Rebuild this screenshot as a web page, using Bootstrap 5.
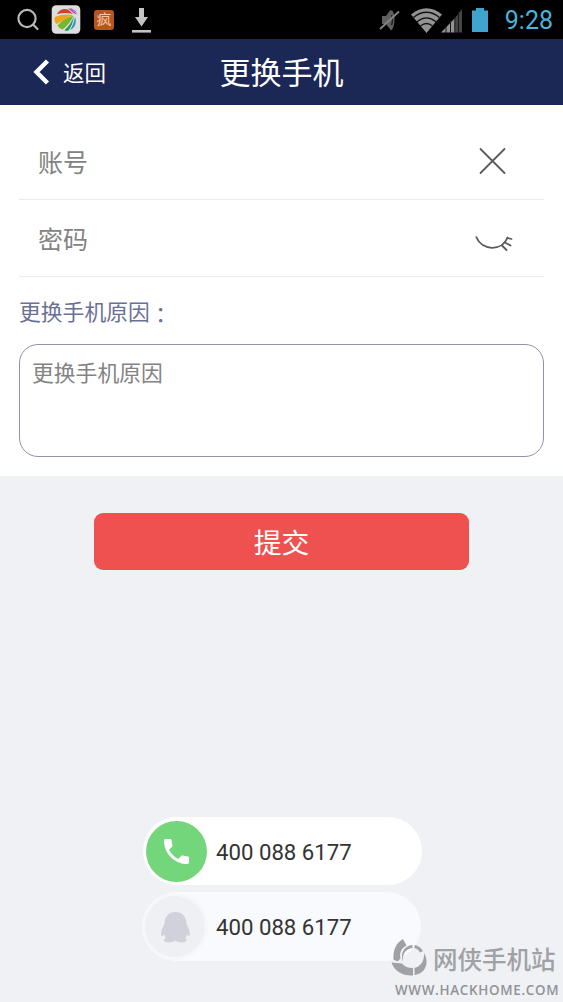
<!DOCTYPE html>
<html lang="zh-CN">
<head>
    <meta charset="UTF-8">
    <meta name="viewport" content="width=device-width, initial-scale=1.0">
    <title>更换手机</title>
    <link href="https://cdn.jsdelivr.net/npm/bootstrap@5.3.0/dist/css/bootstrap.min.css" rel="stylesheet">
    <style>
        body {
            background-color: #eff1f5;
            font-family: Roboto, "Noto Sans CJK SC", sans-serif;
            min-height: 1002px;
            overflow: hidden;
        }
        svg {
            display: block;
            flex-shrink: 0;
        }
        .status-bar {
            height: 39px;
            background: #000;
            padding: 0 10px 0 16px;
        }
        .app-glyph {
            width: 20px;
            height: 20px;
            border-radius: 3px;
            background: #b9531f;
            color: #f3c9a8;
            font-size: 15px;
            line-height: 20px;
            margin: 0 17px 0 9px;
        }
        .clock {
            color: #48b4dc;
            font-size: 25px;
            line-height: 37px;
            padding-top: 2px;
            margin-left: 16px;
        }
        .title-bar {
            height: 66px;
            background: #1b2755;
            color: #fff;
        }
        .title-bar .side {
            width: 188px;
            padding-left: 32px;
            font-size: 21.5px;
        }
        .title-bar .side span {
            margin-left: 13px;
            padding-top: 4px;
        }
        .title-bar h1 {
            font-size: 31px;
            line-height: 66px;
            font-weight: 400;
            padding-top: 4px;
        }
        .form-panel {
            height: 371px;
            padding: 18px 19px 0;
        }
        .field-row {
            height: 77px;
            border-bottom: 1px solid #ebebed;
            padding-left: 19px;
            color: #838383;
            font-size: 25px;
        }
        .field-row span {
            padding-top: 5px;
        }
        .reason-label {
            color: #6a7096;
            font-size: 21.8px;
            line-height: 32px;
            height: 32px;
            margin: 20px 0 15px;
        }
        .reason-label span {
            display: inline-block;
            font-family: "Noto Sans CJK TC", sans-serif;
            vertical-align: top;
            padding-top: 1px;
        }
        .reason-box {
            height: 113px;
            border: 1px solid #9092ac;
            border-radius: 19px;
            padding: 13px 12px;
            color: #838383;
            font-size: 21.8px;
            line-height: 32px;
        }
        .submit-btn {
            width: 375px;
            height: 57px;
            margin-top: 37px;
            border-radius: 9px;
            background: #ee5150;
            color: #fff;
            font-size: 27.8px;
            line-height: 60px;
        }
        .contact-list {
            margin-top: 247px;
            padding-left: 142px;
            gap: 7px;
        }
        .contact-pill {
            width: 279px;
            height: 68px;
            background: #fff;
            color: #333;
            font-size: 22.2px;
        }
        .contact-pill.phone {
            margin-left: 1px;
            padding: 0 0 0 3px;
        }
        .contact-pill.qq {
            height: 69px;
            background: #f8fafd;
            padding-left: 3px;
        }
        .contact-icon {
            width: 61px;
            height: 61px;
            background: #74d67a;
        }
        .qq .contact-icon {
            width: 60px;
            background: #eff0f4;
            box-shadow: 0 0 0 3px #f7f7f9;
        }
        .phone .number { margin-left: 9px; padding-top: 4px; }
        .qq .number { margin-left: 11px; padding-top: 3px; }
        .site-mark {
            right: 4px;
            bottom: 2px;
            width: 170px;
            color: #a0a1a4;
        }
        .site-name {
            font-size: 24.5px;
            line-height: 38px;
            font-weight: 500;
            margin-left: 4px;
            padding-top: 4px;
        }
        .site-url {
            font-family: "Open Sans", sans-serif;
            font-size: 13.4px;
            line-height: 20px;
            letter-spacing: .7px;
            font-weight: 600;
            color: #929397;
            padding-left: 6px;
        }
    </style>
</head>
<body>
    <!-- System status bar -->
    <div class="status-bar d-flex align-items-center justify-content-between">
        <div class="d-flex align-items-center">
            <svg width="24" height="24" viewBox="0 0 24 24" fill="none" stroke="#b9b9b9" stroke-width="2.2" stroke-linecap="round">
                <circle cx="11" cy="10.500" r="8.6"/>
                <path d="M17.3 16.800 L21.500 21"/>
            </svg>
            <svg class="ms-2" width="37" height="39" viewBox="0 0 37 39">
                <rect x="3.7" y="5.2" width="28.6" height="28.6" rx="4.500" fill="#dedede"/>
                <path d="M8.800 14.300 C11 9.500 16 8 20 9.500 L25 14 Q17 12 8.800 14.300Z" fill="#d5412b"/>
                <path d="M6.800 17 Q15 13.500 25 15 L8.500 24 Q5.500 21 6.800 17Z" fill="#eda51c"/>
                <path d="M25.500 15.500 Q15 19 9.500 25.500 Q11 28.500 14.500 29.500 Q22 24 25.500 15.500Z" fill="#78b62b"/>
                <path d="M26 16 Q23 24.500 16.500 30.300 Q18.500 31.500 20.500 30.500 Q25 24 26 16Z" fill="#279a52"/>
                <path d="M27 16.500 Q26 24 22 30 Q26 28.500 27.500 24 Q28.500 20 27 16.500Z" fill="#3192cb"/>
                <path d="M20 8.500 L24 8.500 L29 14.500 L26 13.500Z M25 8.800 Q28 10 29.500 14 L27.500 12Z" fill="#a95abb"/>
            </svg>
            <div class="app-glyph text-center">疯</div>
            <svg width="21" height="28" viewBox="0 0 21 28" fill="#c4c4c4">
                <path d="M8 2 H13 V11 H17 L10.5 20.5 L4 11 H8Z"/>
                <rect x="1" y="24" width="19" height="2.6"/>
            </svg>
        </div>
        <div class="d-flex align-items-center">
            <svg width="22" height="26" viewBox="0 0 22 26">
                <path d="M3 9 H7 L11 3.500 Q15 2 15.500 12 Q15.500 21 12 23.500 L7 17 H3Z" fill="#606060"/>
                <path d="M12.500 8 Q14.500 13 12.500 18" fill="none" stroke="#222" stroke-width="1.5"/>
                <path d="M1 22 L20 4.500" stroke="#858585" stroke-width="1.8"/>
            </svg>
            <svg class="ms-2" width="54" height="28" viewBox="0 0 54 28">
                <path d="M2 8.500 Q17.500 -4 33 8.500 L17.500 27Z" fill="#939393"/>
                <g fill="none" stroke="#111" stroke-width="1.3">
                    <path d="M4.500 11.500 Q17.500 1 30.500 11.500"/>
                    <path d="M8 15.700 Q17.500 8 27 15.700"/>
                    <path d="M11.500 20 Q17.500 15 23.500 20"/>
                </g>
                <path d="M32 26.500 L46 12 V26.500Z" fill="#929292"/>
                <path d="M46 12 L53 3 V26.500 H46Z" fill="#454545"/>
                <path d="M37 20 V27 M41.500 15 V27 M45.800 11 V27 M49.500 6 V27" stroke="#181818" stroke-width="1"/>
            </svg>
            <svg class="ms-2" width="18" height="26" viewBox="0 0 18 26">
                <path d="M5 1 H13 V3.500 H17 V25 H1 V3.500 H5Z" fill="#40a5cd"/>
            </svg>
            <div class="clock">9:28</div>
        </div>
    </div>

    <!-- Title bar -->
    <header class="title-bar d-flex align-items-center">
        <div class="side d-flex align-items-center">
            <svg width="18" height="26" viewBox="0 0 18 26" fill="none" stroke="#fff" stroke-width="4.400">
                <path d="M15.500 2 L4.500 13 L15.500 24"/>
            </svg>
            <span>返回</span>
        </div>
        <h1 class="m-0 flex-fill text-center">更换手机</h1>
        <div class="side"></div>
    </header>

    <!-- Form -->
    <main>
        <div class="form-panel bg-white">
            <div class="field-row d-flex align-items-center">
                <span class="flex-fill">账号</span>
                <svg width="106" height="40" viewBox="0 0 106 40" fill="none" stroke="#5b5b5b" stroke-width="1.800" stroke-linecap="round">
                    <path d="M42.500 8 L66.500 32 M66.500 8 L42.500 32"/>
                </svg>
            </div>
            <div class="field-row d-flex align-items-center">
                <span class="flex-fill">密码</span>
                <svg width="106" height="40" viewBox="0 0 106 40" fill="none" stroke="#5b5b5b" stroke-width="1.800" stroke-linecap="round">
                    <path d="M38.300 19.200 C44 33 64 33.500 69.500 19.500"/>
                    <path d="M69.500 20 L73.500 21 M67 24.500 L72.500 27.500 M64 27.500 L68.500 32"/>
                </svg>
            </div>
            <div class="reason-label">更换手机原因<span lang="zh-TW">：</span></div>
            <div class="reason-box">更换手机原因</div>
        </div>
        <button type="button" class="submit-btn btn d-block mx-auto p-0">提交</button>
    </main>

    <!-- Contact numbers -->
    <div class="contact-list d-flex flex-column">
        <div class="contact-pill phone rounded-pill d-flex align-items-center">
            <div class="contact-icon rounded-circle d-flex align-items-center justify-content-center">
                <svg width="25" height="25" viewBox="3 3 18 18" fill="#fff">
                    <path d="M6.620 10.790c1.440 2.830 3.760 5.140 6.590 6.590l2.200-2.200c.270-.270.670-.360 1.020-.240 1.120.370 2.330.570 3.570.570.550 0 1 .450 1 1V20c0 .550-.450 1-1 1-9.390 0-17-7.610-17-17 0-.550.450-1 1-1h3.500c.550 0 1 .450 1 1 0 1.250.200 2.450.570 3.570.110.350.030.740-.250 1.020l-2.200 2.200z"/>
                </svg>
            </div>
            <span class="number">400 088 6177</span>
        </div>
        <div class="contact-pill qq rounded-pill d-flex align-items-center">
            <div class="contact-icon rounded-circle d-flex align-items-center justify-content-center">
                <svg width="30" height="32" viewBox="0 0 30 32" fill="#d0d1da">
                    <path d="M15.500 1 C9 1 4.500 5.500 4.500 13 C2.500 17 .8 20 1 24 C1.300 26 3 24.800 4.200 23.500 Q4.700 25.500 6 27 C2.800 28 3.300 31.500 8 31.500 Q13 31.500 15.500 29.500 Q18 31.500 22.500 31.500 C27 31.500 27.700 28 25 27 Q26.300 25.500 26.800 23.500 C28 24.800 29.700 26 29.800 24 C30 20 28.500 17 26.500 13 C26.500 5.500 22 1 15.500 1Z"/>
                </svg>
            </div>
            <span class="number">400 088 6177</span>
        </div>
    </div>

    <!-- Site mark over the page corner -->
    <div class="site-mark position-absolute">
        <div class="d-flex align-items-center">
            <svg width="40" height="42" viewBox="0 0 40 42" fill="#a0a1a4">
                <path d="M14 1 L17.500 7.500 C12 10.500 10.500 15 11.500 20.500 L8.500 23.500 L4.500 21.500 C4 12 7 5 14 1Z"/>
                <path d="M2.500 24.500 L13 25.500 C15.500 28.500 19 30 24 30 V37.500 C13 38 5.500 33 2.500 24.500Z"/>
                <path d="M25.500 30 C32 28 35.500 23 35 15 C41 25 36 36 25.500 37Z"/>
                <path d="M14 24 C10.500 14 16 7.500 23.500 7 V10 C17 11 13 15 14 24Z"/>
                <path d="M25.500 7 C29 7.500 32 9.500 34 13 L31 14.500 C29.500 12 28 10.800 25.500 10Z"/>
            </svg>
            <span class="site-name">网侠手机站</span>
        </div>
        <div class="site-url text-nowrap">WWW.HACKHOME.COM</div>
    </div>

    <script src="https://cdn.jsdelivr.net/npm/bootstrap@5.3.0/dist/js/bootstrap.bundle.min.js"></script>
</body>
</html>
